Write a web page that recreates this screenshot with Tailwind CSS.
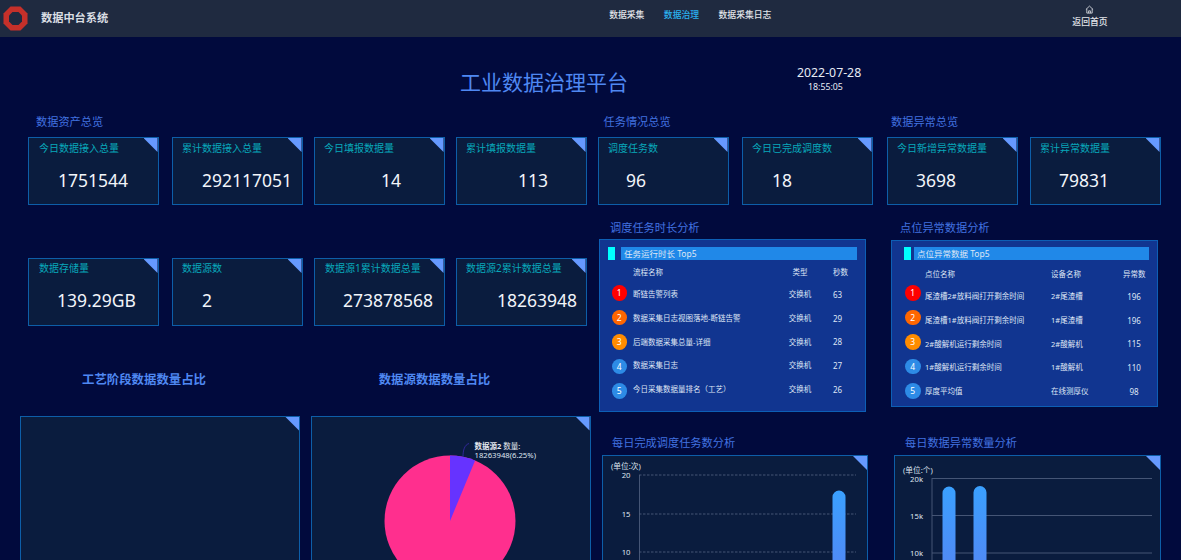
<!DOCTYPE html>
<html lang="zh">
<head>
<meta charset="utf-8">
<title>工业数据治理平台</title>
<script src="https://cdn.jsdelivr.net/npm/@tailwindcss/browser@4"></script>
</head>
<body class="w-[1181px] h-[560px] overflow-hidden bg-[#010a3d] font-['Noto_Sans','Noto_Sans_CJK_SC',sans-serif]">

<header class="h-[37px] bg-[#1f2a40] flex items-center">
  <svg class="ml-[3px] w-[25px] h-[25px] shrink-0" viewBox="0 0 25 25">
    <polygon points="7.5,0.5 17.5,0.5 24.5,7.5 24.5,17.5 17.5,24.5 7.5,24.5 0.5,17.5 0.5,7.5" fill="#c5302a"/>
    <polygon points="9.5,6 15.5,6 19,9.5 19,15.5 15.5,19 9.5,19 6,15.5 6,9.5" fill="#1f2a40"/>
  </svg>
  <div class="ml-[13px] text-[11.2px] font-bold text-[#d9dde3] whitespace-nowrap">数据中台系统</div>
  <nav class="ml-[501px] -mt-[6px] flex gap-[19.5px] text-[8.8px] font-medium text-[#e2e5ea] whitespace-nowrap">
    <span>数据采集</span>
    <span class="text-[#2bb2f0]">数据治理</span>
    <span>数据采集日志</span>
  </nav>
  <div class="ml-[301px] flex flex-col items-center text-[8.8px] font-medium text-[#e2e5ea] leading-[12px]">
    <svg class="w-[9px] h-[9px] mb-[2px] -mt-[4px]" viewBox="0 0 10 10" fill="none" stroke="#e2e5ea" stroke-width="0.9">
      <path d="M1 5 L5 1.2 L9 5 M2 4.2 V9 H8 V4.2 M4 9 V6.5 H6 V9"/>
    </svg>
    <span>返回首页</span>
  </div>
</header>

<div class="h-[75px] flex pl-[460px]">
  <h1 class="pt-[30px] text-[21px] leading-[30px] font-normal text-[#4f88f2] whitespace-nowrap w-[168px]">工业数据治理平台</h1>
  <div class="ml-[169px] pt-[29px] text-[#e8ecf4]">
    <div class="text-[12.3px] leading-[14px]">2022-07-28</div>
    <div class="text-[8.8px] leading-[12px] mt-[1px] ml-[11px]">18:55:05</div>
  </div>
</div>

<main class="grid grid-cols-[598px_583px] items-start">

  <section class="pl-[20px]">
    <h2 class="ml-[16px] h-[25px] pt-[1px] text-[11.2px] leading-[18px] font-normal text-[#4272e0]">数据资产总览</h2>
    <div class="ml-[8px] grid grid-cols-[144px_142px_142px_131px] gap-y-[53.5px]">
      <div class="relative h-[67.5px] w-[130.5px] bg-[#0a1c3e] border border-[#0d5ea8] pt-[3px] pl-[10px]">
        <div class="absolute top-0 right-0 w-[14px] h-[14px] bg-[#6699ff] [clip-path:polygon(0_0,100%_0,100%_100%)]"></div>
        <div class="text-[10px] leading-[14px] text-[#08a8ba]">今日数据接入总量</div>
        <div class="mt-[13px] pl-[19px] text-[17.5px] leading-[24px] text-[#f2f5fa] whitespace-nowrap">1751544</div>
      </div>
      <div class="relative h-[67.5px] w-[130.5px] bg-[#0a1c3e] border border-[#0d5ea8] pt-[3px] pl-[9px]">
        <div class="absolute top-0 right-0 w-[14px] h-[14px] bg-[#6699ff] [clip-path:polygon(0_0,100%_0,100%_100%)]"></div>
        <div class="text-[10px] leading-[14px] text-[#08a8ba]">累计数据接入总量</div>
        <div class="mt-[13px] pl-[20px] text-[17.5px] leading-[24px] text-[#f2f5fa] whitespace-nowrap">292117051</div>
      </div>
      <div class="relative h-[67.5px] w-[130.5px] bg-[#0a1c3e] border border-[#0d5ea8] pt-[3px] pl-[9px]">
        <div class="absolute top-0 right-0 w-[14px] h-[14px] bg-[#6699ff] [clip-path:polygon(0_0,100%_0,100%_100%)]"></div>
        <div class="text-[10px] leading-[14px] text-[#08a8ba]">今日填报数据量</div>
        <div class="mt-[13px] pl-[57px] text-[17.5px] leading-[24px] text-[#f2f5fa] whitespace-nowrap">14</div>
      </div>
      <div class="relative h-[67.5px] w-[130.5px] bg-[#0a1c3e] border border-[#0d5ea8] pt-[3px] pl-[9px]">
        <div class="absolute top-0 right-0 w-[14px] h-[14px] bg-[#6699ff] [clip-path:polygon(0_0,100%_0,100%_100%)]"></div>
        <div class="text-[10px] leading-[14px] text-[#08a8ba]">累计填报数据量</div>
        <div class="mt-[13px] pl-[52px] text-[17.5px] leading-[24px] text-[#f2f5fa] whitespace-nowrap">113</div>
      </div>

      <div class="relative h-[67.5px] w-[130.5px] bg-[#0a1c3e] border border-[#0d5ea8] pt-[2px] pl-[10px]">
        <div class="absolute top-0 right-0 w-[14px] h-[14px] bg-[#6699ff] [clip-path:polygon(0_0,100%_0,100%_100%)]"></div>
        <div class="text-[10px] leading-[14px] text-[#08a8ba]">数据存储量</div>
        <div class="mt-[13px] pl-[18px] text-[17.5px] leading-[24px] text-[#f2f5fa] whitespace-nowrap">139.29GB</div>
      </div>
      <div class="relative h-[67.5px] w-[130.5px] bg-[#0a1c3e] border border-[#0d5ea8] pt-[2px] pl-[9px]">
        <div class="absolute top-0 right-0 w-[14px] h-[14px] bg-[#6699ff] [clip-path:polygon(0_0,100%_0,100%_100%)]"></div>
        <div class="text-[10px] leading-[14px] text-[#08a8ba]">数据源数</div>
        <div class="mt-[13px] pl-[20px] text-[17.5px] leading-[24px] text-[#f2f5fa] whitespace-nowrap">2</div>
      </div>
      <div class="relative h-[67.5px] w-[130.5px] bg-[#0a1c3e] border border-[#0d5ea8] pt-[2px] pl-[10px]">
        <div class="absolute top-0 right-0 w-[14px] h-[14px] bg-[#6699ff] [clip-path:polygon(0_0,100%_0,100%_100%)]"></div>
        <div class="text-[10px] leading-[14px] text-[#08a8ba]">数据源1累计数据总量</div>
        <div class="mt-[13px] pl-[18px] text-[17.5px] leading-[24px] text-[#f2f5fa] whitespace-nowrap">273878568</div>
      </div>
      <div class="relative h-[67.5px] w-[130.5px] bg-[#0a1c3e] border border-[#0d5ea8] pt-[2px] pl-[9px]">
        <div class="absolute top-0 right-0 w-[14px] h-[14px] bg-[#6699ff] [clip-path:polygon(0_0,100%_0,100%_100%)]"></div>
        <div class="text-[10px] leading-[14px] text-[#08a8ba]">数据源2累计数据总量</div>
        <div class="mt-[13px] pl-[31px] text-[17.5px] leading-[24px] text-[#f2f5fa] whitespace-nowrap">18263948</div>
      </div>
    </div>

    <div class="mt-[45px] grid grid-cols-[290.5px_280px]">
      <h2 class="h-[45px] w-[280px] text-center pr-[32px] text-[12.4px] leading-[18px] font-bold text-[#4f88f2]">工艺阶段数据数量占比</h2>
      <h2 class="h-[45px] w-[280px] text-center pr-[32px] text-[12.4px] leading-[18px] font-bold text-[#4f88f2]">数据源数据数量占比</h2>
      <div class="relative h-[200px] w-[280px] bg-[#0a1c3e] border border-[#0d5ea8]">
        <div class="absolute top-0 right-0 w-[14px] h-[14px] bg-[#6699ff] [clip-path:polygon(0_0,100%_0,100%_100%)]"></div>
      </div>
      <div class="relative h-[200px] w-[280px] bg-[#0a1c3e] border border-[#0d5ea8]">
        <svg class="block w-[278px] h-[198px]" viewBox="312.5 417 278 198">
          <circle cx="450.5" cy="521" r="65.5" fill="#ff2f8e"/>
          <path d="M450.5 521 L450.5 455.5 A65.5 65.5 0 0 1 475.6 460.5 Z" fill="#6633ff"/>
          <path d="M463.5 457 C463.5 450 465 445 469.5 443.5" fill="none" stroke="#3a2bb0" stroke-width="0.8"/>
          <text x="475" y="448.5" font-size="7.5" font-weight="700" fill="#e6e9f0">数据源2 <tspan font-weight="400">数量:</tspan></text>
          <text x="475" y="458" font-size="7.7" fill="#dfe4ee">18263948(6.25%)</text>
        </svg>
        <div class="absolute top-0 right-0 w-[14px] h-[14px] bg-[#6699ff] [clip-path:polygon(0_0,100%_0,100%_100%)]"></div>
      </div>
    </div>
  </section>

  <section>
    <div class="h-[25px] pt-[1px] flex text-[11.2px] leading-[18px] text-[#4272e0]">
      <h2 class="ml-[5.5px] font-normal w-[287.5px]">任务情况总览</h2>
      <h2 class="font-normal">数据异常总览</h2>
    </div>
    <div class="grid grid-cols-[144px_145px_143px_131px]">
      <div class="relative h-[67.5px] w-[130.5px] bg-[#0a1c3e] border border-[#0d5ea8] pt-[3px] pl-[9px]">
        <div class="absolute top-0 right-0 w-[14px] h-[14px] bg-[#6699ff] [clip-path:polygon(0_0,100%_0,100%_100%)]"></div>
        <div class="text-[10px] leading-[14px] text-[#08a8ba]">调度任务数</div>
        <div class="mt-[13px] pl-[18px] text-[17.5px] leading-[24px] text-[#f2f5fa] whitespace-nowrap">96</div>
      </div>
      <div class="relative h-[67.5px] w-[130.5px] bg-[#0a1c3e] border border-[#0d5ea8] pt-[3px] pl-[9px]">
        <div class="absolute top-0 right-0 w-[14px] h-[14px] bg-[#6699ff] [clip-path:polygon(0_0,100%_0,100%_100%)]"></div>
        <div class="text-[10px] leading-[14px] text-[#08a8ba]">今日已完成调度数</div>
        <div class="mt-[13px] pl-[20px] text-[17.5px] leading-[24px] text-[#f2f5fa] whitespace-nowrap">18</div>
      </div>
      <div class="relative h-[67.5px] w-[130.5px] bg-[#0a1c3e] border border-[#0d5ea8] pt-[3px] pl-[9px]">
        <div class="absolute top-0 right-0 w-[14px] h-[14px] bg-[#6699ff] [clip-path:polygon(0_0,100%_0,100%_100%)]"></div>
        <div class="text-[10px] leading-[14px] text-[#08a8ba]">今日新增异常数据量</div>
        <div class="mt-[13px] pl-[19px] text-[17.5px] leading-[24px] text-[#f2f5fa] whitespace-nowrap">3698</div>
      </div>
      <div class="relative h-[67.5px] w-[130.5px] bg-[#0a1c3e] border border-[#0d5ea8] pt-[3px] pl-[9px]">
        <div class="absolute top-0 right-0 w-[14px] h-[14px] bg-[#6699ff] [clip-path:polygon(0_0,100%_0,100%_100%)]"></div>
        <div class="text-[10px] leading-[14px] text-[#08a8ba]">累计异常数据量</div>
        <div class="mt-[13px] pl-[19px] text-[17.5px] leading-[24px] text-[#f2f5fa] whitespace-nowrap">79831</div>
      </div>
    </div>

    <div class="mt-[14.5px] grid grid-cols-[293px_290px] items-start">
      <div>
        <h2 class="ml-[12px] h-[20px] text-[11.2px] leading-[18px] font-normal text-[#4272e0]">调度任务时长分析</h2>
        <div class="ml-[1px] w-[267px] h-[173px] bg-[#113590] border border-[#0d5fb5] pt-[7px] text-[#dfe6f5]">
          <div class="flex items-center">
            <div class="ml-[8px] w-[7px] h-[13px] bg-[#00ffff]"></div>
            <div class="ml-[6px] w-[236px] h-[13px] bg-[#2088e8] pl-[3px] text-[8.5px] leading-[13px]">任务运行时长 Top5</div>
          </div>
          <div class="mt-[6px] flex">
            <div class="w-[33px] pl-[11.5px] pt-[19px] flex flex-col gap-[9px] shrink-0">
              <div class="w-[15.6px] h-[15.6px] rounded-full bg-[#ff0000] text-[8.5px] leading-[15.6px] text-center text-white">1</div>
              <div class="w-[15.6px] h-[15.6px] rounded-full bg-[#ff6600] text-[8.5px] leading-[15.6px] text-center text-white">2</div>
              <div class="w-[15.6px] h-[15.6px] rounded-full bg-[#ff8c00] text-[8.5px] leading-[15.6px] text-center text-white">3</div>
              <div class="w-[15.6px] h-[15.6px] rounded-full bg-[#2d8be6] text-[8.5px] leading-[15.6px] text-center text-white">4</div>
              <div class="w-[15.6px] h-[15.6px] rounded-full bg-[#2d8be6] text-[8.5px] leading-[15.6px] text-center text-white">5</div>
            </div>
            <div class="grow text-[7.5px]">
              <div class="grid grid-cols-[147px_40px_1fr] h-[13px] mb-[4px] items-center"><span>流程名称</span><span class="text-center">类型</span><span class="pl-[13px]">秒数</span></div>
              <div class="grid grid-cols-[147px_40px_1fr] h-[23.7px] items-center"><span>断链告警列表</span><span class="text-center">交换机</span><span class="pl-[13px] text-[8px]">63</span></div>
              <div class="grid grid-cols-[147px_40px_1fr] h-[23.7px] items-center"><span>数据采集日志视图落地-断链告警</span><span class="text-center">交换机</span><span class="pl-[13px] text-[8px]">29</span></div>
              <div class="grid grid-cols-[147px_40px_1fr] h-[23.7px] items-center"><span>后端数据采集总量-详细</span><span class="text-center">交换机</span><span class="pl-[13px] text-[8px]">28</span></div>
              <div class="grid grid-cols-[147px_40px_1fr] h-[23.7px] items-center"><span>数据采集日志</span><span class="text-center">交换机</span><span class="pl-[13px] text-[8px]">27</span></div>
              <div class="grid grid-cols-[147px_40px_1fr] h-[23.7px] items-center"><span>今日采集数据量排名（工艺）</span><span class="text-center">交换机</span><span class="pl-[13px] text-[8px]">26</span></div>
            </div>
          </div>
        </div>
        <h2 class="mt-[22px] ml-[14px] h-[21px] text-[11.2px] leading-[18px] font-normal text-[#4272e0]">每日完成调度任务数分析</h2>
        <div class="relative ml-[4px] w-[266px] h-[200px] bg-[#0a1c3e] border border-[#0d5ea8]">
          <svg class="block w-[264px] h-[198px]" viewBox="603 456 264 198">
            <defs><linearGradient id="g1" x1="0" y1="0" x2="0" y2="1"><stop offset="0" stop-color="#3aa0ff"/><stop offset="1" stop-color="#6a70e8"/></linearGradient></defs>
            <text x="611" y="469" font-size="7.7" fill="#dfe4ee">(单位:次)</text>
            <g stroke="#4c5c7c" stroke-width="0.9" stroke-dasharray="2.5 1.5">
              <line x1="639" y1="475" x2="856" y2="475"/>
              <line x1="639" y1="514" x2="856" y2="514"/>
              <line x1="639" y1="552" x2="856" y2="552"/>
            </g>
            <line x1="639.5" y1="475" x2="639.5" y2="654" stroke="#4c5c7c" stroke-width="0.9"/>
            <g font-size="7.7" fill="#dfe4ee" text-anchor="end">
              <text x="630.5" y="478">20</text>
              <text x="630.5" y="516.5">15</text>
              <text x="630.5" y="555">10</text>
            </g>
            <path d="M832.5 654 V497 A6.5 6.5 0 0 1 845.5 497 V654 Z" fill="url(#g1)"/>
          </svg>
          <div class="absolute top-0 right-0 w-[14px] h-[14px] bg-[#6699ff] [clip-path:polygon(0_0,100%_0,100%_100%)]"></div>
        </div>
      </div>

      <div>
        <h2 class="ml-[9px] h-[21px] text-[11.2px] leading-[18px] font-normal text-[#4272e0]">点位异常数据分析</h2>
        <div class="w-[267px] h-[167px] bg-[#113590] border border-[#0d5fb5] pt-[6px] text-[#dfe6f5]">
          <div class="flex items-center">
            <div class="ml-[12px] w-[6.5px] h-[13px] bg-[#00ffff]"></div>
            <div class="ml-[3.5px] w-[235px] h-[13px] bg-[#2088e8] pl-[3px] text-[8.5px] leading-[13px]">点位异常数据 Top5</div>
          </div>
          <div class="mt-[8px] flex">
            <div class="w-[33px] pl-[13px] pt-[17px] flex flex-col gap-[9px] shrink-0">
              <div class="w-[15.6px] h-[15.6px] rounded-full bg-[#ff0000] text-[8.5px] leading-[15.6px] text-center text-white">1</div>
              <div class="w-[15.6px] h-[15.6px] rounded-full bg-[#ff6600] text-[8.5px] leading-[15.6px] text-center text-white">2</div>
              <div class="w-[15.6px] h-[15.6px] rounded-full bg-[#ff8c00] text-[8.5px] leading-[15.6px] text-center text-white">3</div>
              <div class="w-[15.6px] h-[15.6px] rounded-full bg-[#2d8be6] text-[8.5px] leading-[15.6px] text-center text-white">4</div>
              <div class="w-[15.6px] h-[15.6px] rounded-full bg-[#2d8be6] text-[8.5px] leading-[15.6px] text-center text-white">5</div>
            </div>
            <div class="grow text-[7.5px]">
              <div class="grid grid-cols-[126px_72px_22px] h-[13px] mb-[4px] items-center"><span>点位名称</span><span>设备名称</span><span class="text-center whitespace-nowrap">异常数</span></div>
              <div class="grid grid-cols-[126px_72px_22px] h-[23.7px] items-center"><span>尾渣槽2#放料阀打开剩余时间</span><span>2#尾渣槽</span><span class="text-center text-[8px]">196</span></div>
              <div class="grid grid-cols-[126px_72px_22px] h-[23.7px] items-center"><span>尾渣槽1#放料阀打开剩余时间</span><span>1#尾渣槽</span><span class="text-center text-[8px]">196</span></div>
              <div class="grid grid-cols-[126px_72px_22px] h-[23.7px] items-center"><span>2#酸解机运行剩余时间</span><span>2#酸解机</span><span class="text-center text-[8px]">115</span></div>
              <div class="grid grid-cols-[126px_72px_22px] h-[23.7px] items-center"><span>1#酸解机运行剩余时间</span><span>1#酸解机</span><span class="text-center text-[8px]">110</span></div>
              <div class="grid grid-cols-[126px_72px_22px] h-[23.7px] items-center"><span>厚度平均值</span><span>在线测厚仪</span><span class="text-center text-[8px]">98</span></div>
            </div>
          </div>
        </div>
        <h2 class="mt-[27px] ml-[14px] h-[21px] text-[11.2px] leading-[18px] font-normal text-[#4272e0]">每日数据异常数量分析</h2>
        <div class="relative ml-[3px] w-[267px] h-[200px] bg-[#0a1c3e] border border-[#0d5ea8]">
          <svg class="block w-[265px] h-[198px]" viewBox="895 456 265 198">
            <defs><linearGradient id="g2" x1="0" y1="0" x2="0" y2="1"><stop offset="0" stop-color="#3aa0ff"/><stop offset="1" stop-color="#6a70e8"/></linearGradient></defs>
            <text x="903" y="473" font-size="7.7" fill="#dfe4ee">(单位:个)</text>
            <g stroke="#4c5c7c" stroke-width="0.9">
              <line x1="932" y1="478.5" x2="1152" y2="478.5"/>
              <line x1="932" y1="515.5" x2="1152" y2="515.5"/>
              <line x1="932" y1="553" x2="1152" y2="553"/>
              <line x1="932" y1="478" x2="932" y2="654"/>
            </g>
            <g font-size="7.7" fill="#dfe4ee" text-anchor="end">
              <text x="923" y="482">20k</text>
              <text x="923" y="519">15k</text>
              <text x="923" y="556">10k</text>
            </g>
            <path d="M942.5 654 V493 A6.5 6.5 0 0 1 955.5 493 V654 Z" fill="url(#g2)"/>
            <path d="M973.5 654 V492.5 A6.5 6.5 0 0 1 986.5 492.5 V654 Z" fill="url(#g2)"/>
          </svg>
          <div class="absolute top-0 right-0 w-[14px] h-[14px] bg-[#6699ff] [clip-path:polygon(0_0,100%_0,100%_100%)]"></div>
        </div>
      </div>
    </div>
  </section>
</main>
</body>
</html>
